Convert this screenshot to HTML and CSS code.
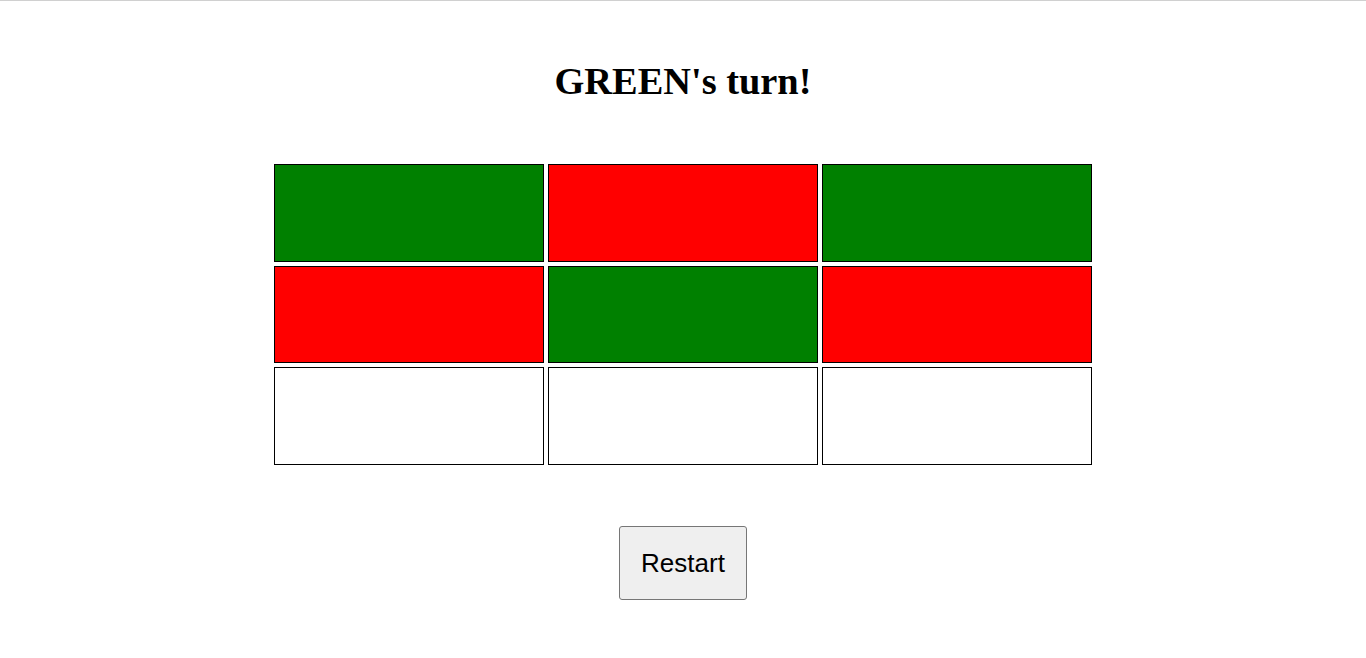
FILE: index.html
```html
<!DOCTYPE html>
<html>
<head>
<meta charset="utf-8">
<title>Game</title>
<link rel="stylesheet" href="styles.css">
</head>
<body>
<div class="page">
  <h1 class="status">GREEN's turn!</h1>
  <div class="board">
    <div class="cell green"></div>
    <div class="cell red"></div>
    <div class="cell green"></div>
    <div class="cell red"></div>
    <div class="cell green"></div>
    <div class="cell red"></div>
    <div class="cell"></div>
    <div class="cell"></div>
    <div class="cell"></div>
  </div>
  <div class="actions">
    <button class="restart">Restart</button>
  </div>
</div>
</body>
</html>
```
FILE: styles.css
```css
html, body {
  margin: 0;
  padding: 0;
  background: #ffffff;
}
.page {
  border-top: 1px solid #d0d0d0;
  display: flex;
  flex-direction: column;
  align-items: center;
  font-family: "Liberation Serif", "Times New Roman", serif;
}
.status {
  margin: 60px 0 0 0;
  font-size: 38.4px;
  line-height: 40px;
  font-weight: bold;
  color: #000;
  text-align: center;
}
.board {
  margin-top: 63px;
  width: 818px;
  height: 301px;
  display: grid;
  grid-template-columns: repeat(3, 1fr);
  grid-template-rows: repeat(3, 1fr);
  gap: 4px;
}
.cell {
  border: 1px solid #000;
  background: #fff;
}
.cell.green { background: #008000; }
.cell.red { background: #ff0000; }
.actions {
  margin-top: 61px;
}
.restart {
  font-family: "Liberation Sans", Arial, sans-serif;
  font-size: 26px;
  line-height: 30px;
  padding: 21px 21px;
  background: #efefef;
  border: 1px solid #767676;
  border-radius: 3px;
  color: #000;
}
```
